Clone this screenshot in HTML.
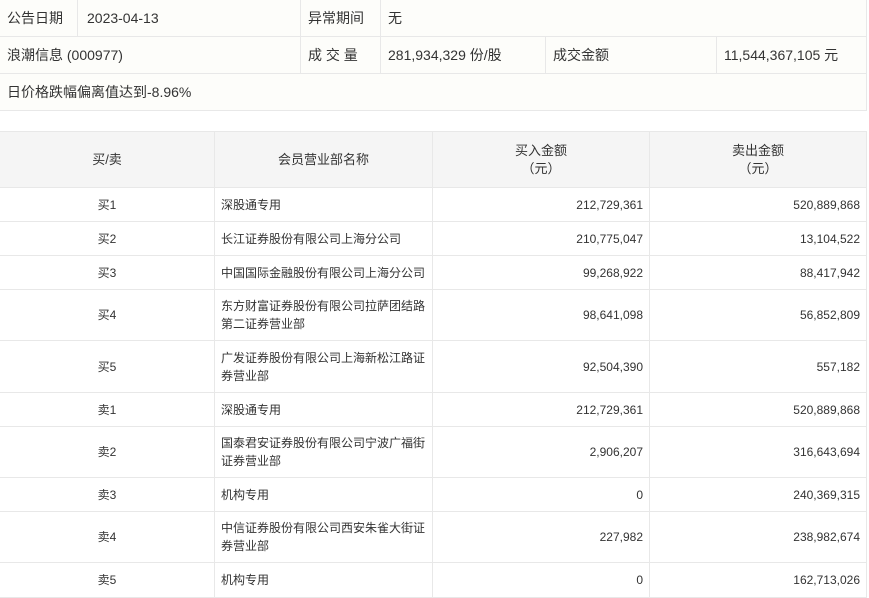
<!DOCTYPE html>
<html><head><meta charset="utf-8"><style>
*{margin:0;padding:0;box-sizing:border-box}
body{width:869px;height:598px;background:#fff;font-family:"Liberation Sans","Noto Sans CJK SC",sans-serif;color:#333;position:relative;overflow:hidden}
.c{position:absolute;display:flex;align-items:center;border-right:1px solid #e8e8e8;border-bottom:1px solid #e8e8e8}
.top .c{font-size:14px;padding-left:7px;background:#fdfdfa}
.t .c{font-size:12px;line-height:18px}
.h{background:#f5f5f5;justify-content:center;text-align:center;font-size:13px!important}
.ce{justify-content:center}
.r{justify-content:flex-end;padding-right:6px}
.l{padding-left:6px;padding-right:6px}
</style></head><body>
<div class="top">
<div class="c" style="left:0;top:0;width:78px;height:37px">公告日期</div>
<div class="c" style="left:78px;top:0;width:223px;height:37px;padding-left:9px">2023-04-13</div>
<div class="c" style="left:301px;top:0;width:80px;height:37px">异常期间</div>
<div class="c" style="left:381px;top:0;width:486px;height:37px">无</div>
<div class="c" style="left:0;top:37px;width:301px;height:37px">浪潮信息 (000977)</div>
<div class="c" style="left:301px;top:37px;width:80px;height:37px">成 交 量</div>
<div class="c" style="left:381px;top:37px;width:165px;height:37px">281,934,329 份/股</div>
<div class="c" style="left:546px;top:37px;width:171px;height:37px">成交金额</div>
<div class="c" style="left:717px;top:37px;width:150px;height:37px">11,544,367,105 元</div>
<div class="c" style="left:0;top:74px;width:867px;height:37px">日价格跌幅偏离值达到-8.96%</div>
</div>
<div class="t">
<div class="c h" style="left:0;top:131px;width:215px;height:57px;border-top:1px solid #e8e8e8">买/卖</div>
<div class="c h" style="left:215px;top:131px;width:218px;height:57px;border-top:1px solid #e8e8e8">会员营业部名称</div>
<div class="c h" style="left:433px;top:131px;width:217px;height:57px;border-top:1px solid #e8e8e8">买入金额<br>（元）</div>
<div class="c h" style="left:650px;top:131px;width:217px;height:57px;border-top:1px solid #e8e8e8">卖出金额<br>（元）</div>
<div class="c ce" style="left:0;top:188px;width:215px;height:34px">买1</div><div class="c l" style="left:215px;top:188px;width:218px;height:34px">深股通专用</div><div class="c r" style="left:433px;top:188px;width:217px;height:34px">212,729,361</div><div class="c r" style="left:650px;top:188px;width:217px;height:34px">520,889,868</div>
<div class="c ce" style="left:0;top:222px;width:215px;height:34px">买2</div><div class="c l" style="left:215px;top:222px;width:218px;height:34px">长江证券股份有限公司上海分公司</div><div class="c r" style="left:433px;top:222px;width:217px;height:34px">210,775,047</div><div class="c r" style="left:650px;top:222px;width:217px;height:34px">13,104,522</div>
<div class="c ce" style="left:0;top:256px;width:215px;height:34px">买3</div><div class="c l" style="left:215px;top:256px;width:218px;height:34px">中国国际金融股份有限公司上海分公司</div><div class="c r" style="left:433px;top:256px;width:217px;height:34px">99,268,922</div><div class="c r" style="left:650px;top:256px;width:217px;height:34px">88,417,942</div>
<div class="c ce" style="left:0;top:290px;width:215px;height:51px">买4</div><div class="c l" style="left:215px;top:290px;width:218px;height:51px">东方财富证券股份有限公司拉萨团结路第二证券营业部</div><div class="c r" style="left:433px;top:290px;width:217px;height:51px">98,641,098</div><div class="c r" style="left:650px;top:290px;width:217px;height:51px">56,852,809</div>
<div class="c ce" style="left:0;top:341px;width:215px;height:52px">买5</div><div class="c l" style="left:215px;top:341px;width:218px;height:52px">广发证券股份有限公司上海新松江路证券营业部</div><div class="c r" style="left:433px;top:341px;width:217px;height:52px">92,504,390</div><div class="c r" style="left:650px;top:341px;width:217px;height:52px">557,182</div>
<div class="c ce" style="left:0;top:393px;width:215px;height:34px">卖1</div><div class="c l" style="left:215px;top:393px;width:218px;height:34px">深股通专用</div><div class="c r" style="left:433px;top:393px;width:217px;height:34px">212,729,361</div><div class="c r" style="left:650px;top:393px;width:217px;height:34px">520,889,868</div>
<div class="c ce" style="left:0;top:427px;width:215px;height:51px">卖2</div><div class="c l" style="left:215px;top:427px;width:218px;height:51px">国泰君安证券股份有限公司宁波广福街证券营业部</div><div class="c r" style="left:433px;top:427px;width:217px;height:51px">2,906,207</div><div class="c r" style="left:650px;top:427px;width:217px;height:51px">316,643,694</div>
<div class="c ce" style="left:0;top:478px;width:215px;height:34px">卖3</div><div class="c l" style="left:215px;top:478px;width:218px;height:34px">机构专用</div><div class="c r" style="left:433px;top:478px;width:217px;height:34px">0</div><div class="c r" style="left:650px;top:478px;width:217px;height:34px">240,369,315</div>
<div class="c ce" style="left:0;top:512px;width:215px;height:51px">卖4</div><div class="c l" style="left:215px;top:512px;width:218px;height:51px">中信证券股份有限公司西安朱雀大街证券营业部</div><div class="c r" style="left:433px;top:512px;width:217px;height:51px">227,982</div><div class="c r" style="left:650px;top:512px;width:217px;height:51px">238,982,674</div>
<div class="c ce" style="left:0;top:563px;width:215px;height:35px">卖5</div><div class="c l" style="left:215px;top:563px;width:218px;height:35px">机构专用</div><div class="c r" style="left:433px;top:563px;width:217px;height:35px">0</div><div class="c r" style="left:650px;top:563px;width:217px;height:35px">162,713,026</div>
</div>
</body></html>
